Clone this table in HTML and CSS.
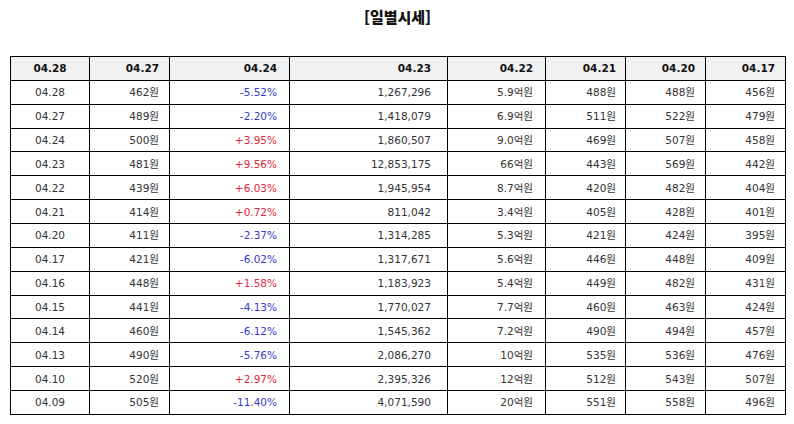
FILE: index.html
```html
<!DOCTYPE html>
<html lang="ko">
<head>
<meta charset="utf-8">
<title>일별시세</title>
<link rel="stylesheet" href="styles.css">
</head>
<body>
<div class="page">
  <h2 class="title">[일별시세]</h2>
  <table class="quotes">
    <colgroup>
      <col class="c1"><col class="c2"><col class="c3"><col class="c4"><col class="c5"><col class="c6"><col class="c7"><col class="c8">
    </colgroup>
    <thead>
      <tr><th>04.28</th><th>04.27</th><th>04.24</th><th>04.23</th><th>04.22</th><th>04.21</th><th>04.20</th><th>04.17</th></tr>
    </thead>
    <tbody>
      <tr><td>04.28</td><td>462원</td><td class="dn">-5.52%</td><td>1,267,296</td><td>5.9억원</td><td>488원</td><td>488원</td><td>456원</td></tr>
      <tr><td>04.27</td><td>489원</td><td class="dn">-2.20%</td><td>1,418,079</td><td>6.9억원</td><td>511원</td><td>522원</td><td>479원</td></tr>
      <tr><td>04.24</td><td>500원</td><td class="up">+3.95%</td><td>1,860,507</td><td>9.0억원</td><td>469원</td><td>507원</td><td>458원</td></tr>
      <tr><td>04.23</td><td>481원</td><td class="up">+9.56%</td><td>12,853,175</td><td>66억원</td><td>443원</td><td>569원</td><td>442원</td></tr>
      <tr><td>04.22</td><td>439원</td><td class="up">+6.03%</td><td>1,945,954</td><td>8.7억원</td><td>420원</td><td>482원</td><td>404원</td></tr>
      <tr><td>04.21</td><td>414원</td><td class="up">+0.72%</td><td>811,042</td><td>3.4억원</td><td>405원</td><td>428원</td><td>401원</td></tr>
      <tr><td>04.20</td><td>411원</td><td class="dn">-2.37%</td><td>1,314,285</td><td>5.3억원</td><td>421원</td><td>424원</td><td>395원</td></tr>
      <tr><td>04.17</td><td>421원</td><td class="dn">-6.02%</td><td>1,317,671</td><td>5.6억원</td><td>446원</td><td>448원</td><td>409원</td></tr>
      <tr><td>04.16</td><td>448원</td><td class="up">+1.58%</td><td>1,183,923</td><td>5.4억원</td><td>449원</td><td>482원</td><td>431원</td></tr>
      <tr><td>04.15</td><td>441원</td><td class="dn">-4.13%</td><td>1,770,027</td><td>7.7억원</td><td>460원</td><td>463원</td><td>424원</td></tr>
      <tr><td>04.14</td><td>460원</td><td class="dn">-6.12%</td><td>1,545,362</td><td>7.2억원</td><td>490원</td><td>494원</td><td>457원</td></tr>
      <tr><td>04.13</td><td>490원</td><td class="dn">-5.76%</td><td>2,086,270</td><td>10억원</td><td>535원</td><td>536원</td><td>476원</td></tr>
      <tr><td>04.10</td><td>520원</td><td class="up">+2.97%</td><td>2,395,326</td><td>12억원</td><td>512원</td><td>543원</td><td>507원</td></tr>
      <tr><td>04.09</td><td>505원</td><td class="dn">-11.40%</td><td>4,071,590</td><td>20억원</td><td>551원</td><td>558원</td><td>496원</td></tr>
    </tbody>
  </table>
</div>
</body>
</html>
```

FILE: styles.css
```css
html, body {
  margin: 0;
  padding: 0;
  background: #ffffff;
}

.page {
  padding: 0 9px 0 10px;
  font-family: "DejaVu Sans", "Noto Sans CJK KR", sans-serif;
}

.title {
  margin: 0;
  padding-top: 8px;
  height: 48px;
  line-height: 18px;
  text-align: center;
  font-family: "Noto Sans CJK KR", sans-serif;
  font-size: 15px;
  font-weight: 900;
  color: #111111;
}

.quotes {
  width: 776px;
  border-collapse: collapse;
  table-layout: fixed;
  font-size: 10.5px;
}

.quotes tr {
  height: 23.87px;
}

.c1 { width: 79px; }
.c2 { width: 80px; }
.c3 { width: 120px; }
.c4 { width: 158px; }
.c5 { width: 98px; }
.c6 { width: 80px; }
.c7 { width: 80px; }
.c8 { width: 80px; }

.quotes th,
.quotes td {
  border: 1px solid #000000;
  padding: 0 10px 0 0;
  line-height: 14px;
  text-align: right;
  white-space: nowrap;
}

.quotes th {
  background: #f1f1f1;
  color: #111111;
  font-weight: bold;
}

.quotes td {
  color: #333333;
}

.quotes th:nth-child(1),
.quotes td:nth-child(1) {
  text-align: center;
  padding: 0;
}

.quotes th:nth-child(3),
.quotes td:nth-child(3) { padding-right: 12px; }
.quotes th:nth-child(4),
.quotes td:nth-child(4) { padding-right: 16px; }
.quotes th:nth-child(5),
.quotes td:nth-child(5) { padding-right: 12px; }
.quotes th:nth-child(6),
.quotes td:nth-child(6) { padding-right: 9px; }
.quotes th:nth-child(7),
.quotes td:nth-child(7),
.quotes th:nth-child(8),
.quotes td:nth-child(8) { padding-right: 10px; }

.quotes td.up { color: #e0283c; }
.quotes td.dn { color: #3a3acc; }
```
